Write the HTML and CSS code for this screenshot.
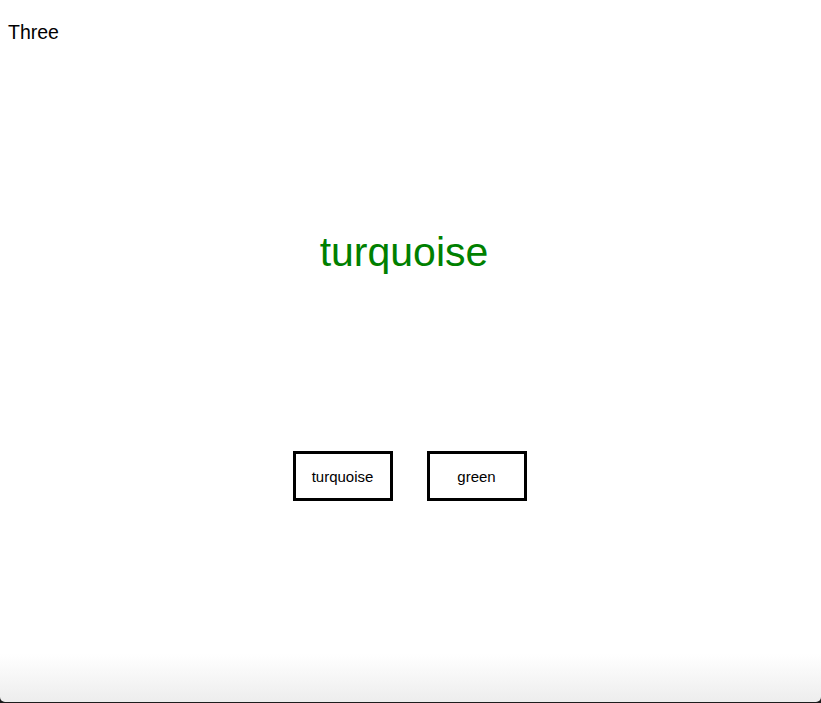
FILE: index.html
```html
<!DOCTYPE html>
<html lang="en">
<head>
<meta charset="utf-8">
<title>Three</title>
<link rel="stylesheet" href="styles.css">
</head>
<body>
  <div class="page">
    <div class="title">Three</div>
    <div class="prompt">turquoise</div>
    <div class="choices">
      <button class="choice" type="button">turquoise</button>
      <button class="choice" type="button">green</button>
    </div>
  </div>
</body>
</html>
```
FILE: styles.css
```css
html {
  height: 100%;
  background: #1c1c1c;
}
body {
  margin: 0;
  height: calc(100% - 1px);
  border-radius: 0 0 5px 5px;
  background: linear-gradient(to bottom, #ffffff calc(100% - 48px), #ededed 100%);
  font-family: "Liberation Sans", Arial, sans-serif;
  color: #000;
}
.page {
  padding: 21px 8px 0;
  display: flex;
  flex-direction: column;
}
.title {
  font-size: 19.5px;
  line-height: 23px;
}
.prompt {
  margin-top: 185px;
  text-align: center;
  padding-right: 13px;
  color: #008000;
  font-size: 41px;
  line-height: 47px;
}
.choices {
  margin-top: 175px;
  display: flex;
  justify-content: center;
  gap: 34px;
  padding-right: 2px;
}
.choice {
  box-sizing: border-box;
  width: 100px;
  height: 50px;
  border: 3px solid #000;
  background: #fff;
  border-radius: 0;
  padding: 0;
  font-family: "Liberation Sans", Arial, sans-serif;
  font-size: 15px;
  color: #000;
}
```
